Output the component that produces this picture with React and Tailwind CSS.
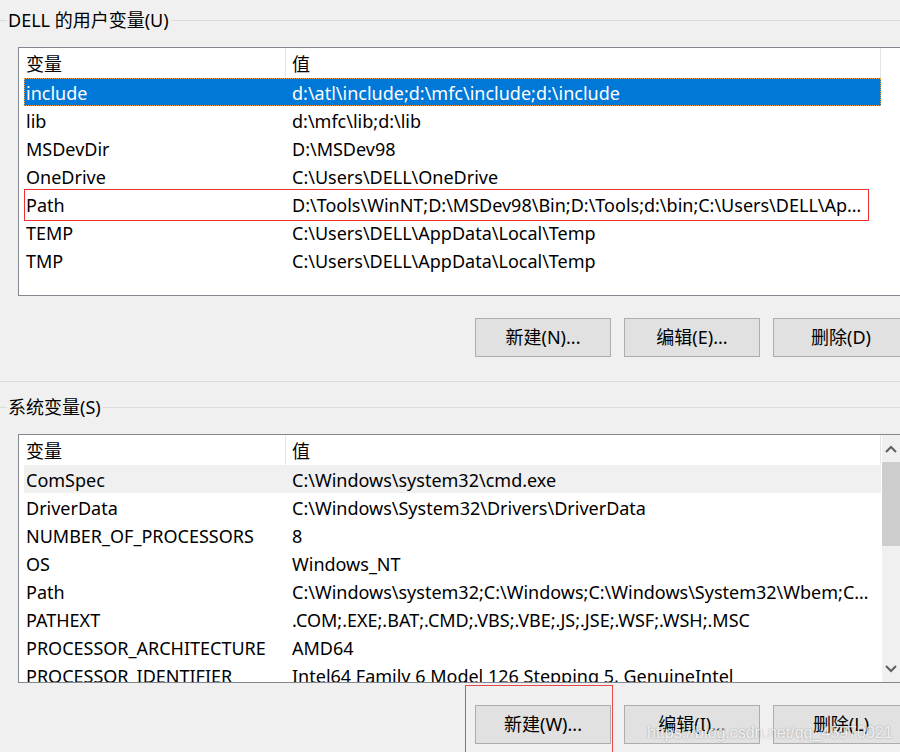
import React from "react";

const userVars = [
  { name: "include", value: "d:\\atl\\include;d:\\mfc\\include;d:\\include", selected: true },
  { name: "lib", value: "d:\\mfc\\lib;d:\\lib" },
  { name: "MSDevDir", value: "D:\\MSDev98" },
  { name: "OneDrive", value: "C:\\Users\\DELL\\OneDrive" },
  {
    name: "Path",
    value: "D:\\Tools\\WinNT;D:\\MSDev98\\Bin;D:\\Tools;d:\\bin;C:\\Users\\DELL\\AppData\\Local\\Microsoft\\WindowsApps",
    marked: true,
  },
  { name: "TEMP", value: "C:\\Users\\DELL\\AppData\\Local\\Temp" },
  { name: "TMP", value: "C:\\Users\\DELL\\AppData\\Local\\Temp" },
];

const sysVars = [
  { name: "ComSpec", value: "C:\\Windows\\system32\\cmd.exe", hover: true },
  { name: "DriverData", value: "C:\\Windows\\System32\\Drivers\\DriverData" },
  { name: "NUMBER_OF_PROCESSORS", value: "8" },
  { name: "OS", value: "Windows_NT" },
  {
    name: "Path",
    value: "C:\\Windows\\system32;C:\\Windows;C:\\Windows\\System32\\Wbem;C:\\Windows\\System32\\WindowsPowerShell",
  },
  { name: "PATHEXT", value: ".COM;.EXE;.BAT;.CMD;.VBS;.VBE;.JS;.JSE;.WSF;.WSH;.MSC" },
  { name: "PROCESSOR_ARCHITECTURE", value: "AMD64" },
  { name: "PROCESSOR_IDENTIFIER", value: "Intel64 Family 6 Model 126 Stepping 5, GenuineIntel" },
  { name: "PROCESSOR_LEVEL", value: "6" },
];

function GroupLabel({ text }) {
  return (
    <div className="flex items-center h-[24px]">
      <div className="w-[7px] h-px bg-[#dcdcdc]"></div>
      <span className="pl-[1px] pr-[2px] leading-[24px] whitespace-nowrap">{text}</span>
      <div className="flex-1 h-px bg-[#dcdcdc]"></div>
    </div>
  );
}

function Header() {
  return (
    <div className="flex h-[30px] items-center bg-white">
      <div className="w-[266px] pl-[7px] pt-[2px] leading-[28px]">变量</div>
      <div className="w-px h-full bg-[#e5e5e5]"></div>
      <div className="w-[594px] pl-[6px] pt-[2px] leading-[28px]">值</div>
      <div className="w-px h-full bg-[#e5e5e5]"></div>
    </div>
  );
}

function Row({ item }) {
  let cls = "relative flex h-[28px] w-[857px] items-center leading-[28px] pt-[1px]";
  if (item.selected) cls += " bg-[#0078d7] text-white outline outline-1 outline-dotted outline-[#f0a040] -outline-offset-1";
  if (item.hover) cls += " bg-[#f0f0f0]";
  return (
    <div className={cls}>
      <div className="w-[268px] pl-[2px] whitespace-nowrap">{item.name}</div>
      <div className="w-[578px] truncate">{item.value}</div>
      {item.marked && (
        <span className="absolute left-0 top-[-1px] bottom-[-3px] w-[845px] border border-[#f03030]"></span>
      )}
    </div>
  );
}

function Chevron({ up }) {
  return (
    <svg width="12" height="8" viewBox="0 0 12 8">
      <path
        d={up ? "M1 7 L6 2 L11 7" : "M1 1 L6 6 L11 1"}
        fill="none"
        stroke="#606060"
        strokeWidth="2"
      />
    </svg>
  );
}

function Buttons({ labels, marked }) {
  return (
    <div className="flex pl-[475px] gap-[13px]">
      {labels.map((l, i) => (
        <div key={l} className="relative shrink-0">
          <div className="w-[136px] h-[39px] bg-[#e1e1e1] border border-[#adadad] flex items-center justify-center">
            {l}
          </div>
          {marked && i === 0 && (
            <span className="absolute -left-[10px] -right-[2px] -top-[20px] -bottom-[20px] border border-[#e84848]"></span>
          )}
        </div>
      ))}
    </div>
  );
}

export default function App() {
  return (
    <div
      className="relative w-[900px] h-[752px] overflow-hidden bg-[#f0f0f0] text-[18px] text-black"
      style={{ fontFamily: '"Noto Sans", "Noto Sans CJK SC", sans-serif' }}
    >
      {/* user variables */}
      <div className="pt-[8px]">
        <GroupLabel text="DELL 的用户变量(U)" />
      </div>

      <div className="ml-[18px] mt-[15px] w-[890px] h-[249px] border border-[#828790] bg-white overflow-hidden">
        <Header />
        <div className="pl-[5px]">
          {userVars.map((v) => (
            <Row key={v.name} item={v} />
          ))}
        </div>
      </div>

      <div className="mt-[22px]">
        <Buttons labels={["新建(N)...", "编辑(E)...", "删除(D)"]} />
      </div>

      <div className="mt-[24px] h-px bg-[#dcdcdc]"></div>

      {/* system variables */}
      <div className="mt-[13px]">
        <GroupLabel text="系统变量(S)" />
      </div>

      <div className="ml-[18px] mt-[15px] w-[890px] h-[249px] border border-[#828790] bg-white overflow-hidden flex">
        <div className="w-[863px] shrink-0 overflow-hidden">
          <Header />
          <div className="pl-[5px]">
            {sysVars.map((v) => (
              <Row key={v.name} item={v} />
            ))}
          </div>
        </div>
        <div className="w-[18px] shrink-0 bg-[#f0f0f0] flex flex-col">
          <div className="h-[27px] flex items-center justify-center">
            <Chevron up />
          </div>
          <div className="h-[84px] bg-[#cdcdcd]"></div>
          <div className="flex-1"></div>
          <div className="h-[27px] flex items-center justify-center">
            <Chevron />
          </div>
        </div>
      </div>

      <div className="mt-[22px]">
        <Buttons labels={["新建(W)...", "编辑(I)...", "删除(L)"]} marked />
      </div>

      <span
        className="absolute left-[647px] top-[721px] text-[16px] text-white/80 whitespace-nowrap [text-shadow:0_0_2px_rgba(0,0,0,0.35)]"
        style={{ fontFamily: '"Liberation Sans", Arial, sans-serif' }}
      >
        https://blog.csdn.net/qq_45970021
      </span>
    </div>
  );
}
